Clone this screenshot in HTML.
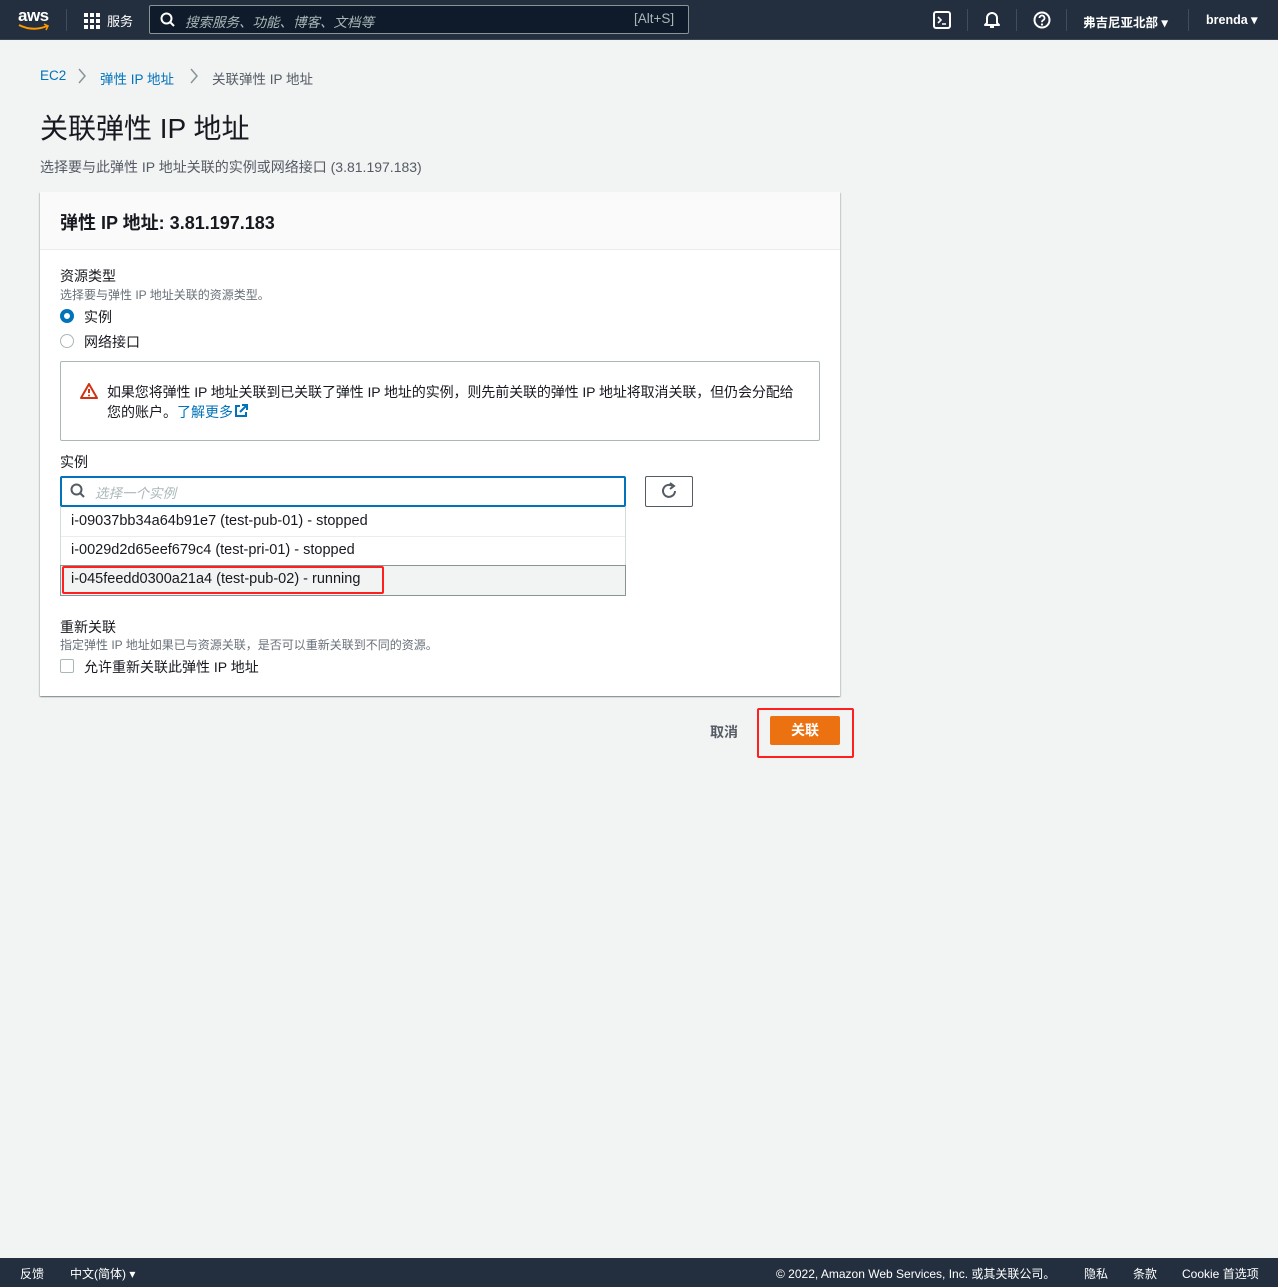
<!DOCTYPE html>
<html><head><meta charset="utf-8"><style>
*{box-sizing:border-box;margin:0;padding:0}
body{width:1278px;height:1287px;background:#f2f3f3;font-family:"Liberation Sans","Noto Sans CJK SC",sans-serif;color:#16191f;position:relative;overflow:hidden;font-size:14px}
.a{position:absolute;white-space:nowrap}
.hdr{position:absolute;left:0;top:0;width:1278px;height:40px;background:#232f3e;border-bottom:1px solid #3a4553}
.ftr{position:absolute;left:0;top:1258px;width:1278px;height:29px;background:#232f3e;color:#fff;font-size:12px}
.w{color:#fff}
.sep{position:absolute;top:9px;width:1px;height:22px;background:#414d5c}
</style></head><body>
<div class="hdr">
  <div class="a w" style="left:18px;top:6px;font-size:17px;font-weight:bold;letter-spacing:-0.5px">aws</div>
  <svg class="a" style="left:17px;top:23px" width="34" height="8"><path d="M2 2 Q16 9 30 3" stroke="#ff9900" stroke-width="2" fill="none"/><path d="M27 1 L31 3 L29 7" stroke="#ff9900" stroke-width="1.5" fill="none"/></svg>
  <div class="sep" style="left:66px"></div>
  <svg class="a" style="left:84px;top:13px" width="16" height="16"><g fill="#fff"><rect x="0" y="0" width="4" height="4"/><rect x="6" y="0" width="4" height="4"/><rect x="12" y="0" width="4" height="4"/><rect x="0" y="6" width="4" height="4"/><rect x="6" y="6" width="4" height="4"/><rect x="12" y="6" width="4" height="4"/><rect x="0" y="12" width="4" height="4"/><rect x="6" y="12" width="4" height="4"/><rect x="12" y="12" width="4" height="4"/></g></svg>
  <div class="a w" style="left:107px;top:11px;font-size:13px">服务</div>
  <div class="a" style="left:149px;top:5px;width:540px;height:29px;background:#0f1b2a;border:1px solid #879596;border-radius:2px"></div>
  <svg class="a" style="left:160px;top:12px" width="16" height="16"><circle cx="6.5" cy="6.5" r="5" stroke="#fff" stroke-width="2" fill="none"/><path d="M10 10 L14 14" stroke="#fff" stroke-width="2"/></svg>
  <div class="a" style="left:185px;top:11px;font-size:13.5px;color:#aab7b8;font-style:italic">搜索服务、功能、博客、文档等</div>
  <div class="a" style="left:634px;top:11px;font-size:13.5px;color:#aab7b8">[Alt+S]</div>
  <svg class="a" style="left:933px;top:11px" width="18" height="18"><rect x="1" y="1" width="16" height="16" rx="2" stroke="#fff" stroke-width="2" fill="none"/><path d="M5 6 L8 9 L5 12 M9 13 H13" stroke="#fff" stroke-width="1.6" fill="none"/></svg>
  <div class="sep" style="left:967px"></div>
  <svg class="a" style="left:983px;top:10px" width="18" height="20"><path d="M4 13 V8 a5 5 0 0 1 10 0 V13 L16 15 H2 Z" stroke="#fff" stroke-width="2" fill="none" stroke-linejoin="round"/><path d="M7 17 h4" stroke="#fff" stroke-width="2"/></svg>
  <div class="sep" style="left:1016px"></div>
  <svg class="a" style="left:1033px;top:11px" width="18" height="18"><circle cx="9" cy="9" r="7.5" stroke="#fff" stroke-width="2" fill="none"/><path d="M6.5 7 a2.5 2.5 0 1 1 3.5 2.3 c-1 .4 -1 1 -1 2" stroke="#fff" stroke-width="1.8" fill="none"/><circle cx="9" cy="13.5" r="1.1" fill="#fff"/></svg>
  <div class="sep" style="left:1066px"></div>
  <div class="a w" style="left:1083px;top:12px;font-size:12.5px;font-weight:bold">弗吉尼亚北部 ▾</div>
  <div class="sep" style="left:1188px"></div>
  <div class="a w" style="left:1206px;top:12px;font-size:12.5px;font-weight:bold">brenda ▾</div>
</div>

<div class="a" style="left:40px;top:68px;font-size:13.5px;color:#0073bb">EC2</div>
<svg class="a" style="left:77px;top:68px" width="10" height="16"><path d="M2 1 L8 8 L2 15" stroke="#879596" stroke-width="1.5" fill="none"/></svg>
<div class="a" style="left:100px;top:68px;font-size:13.5px;color:#0073bb">弹性 IP 地址</div>
<svg class="a" style="left:189px;top:68px" width="10" height="16"><path d="M2 1 L8 8 L2 15" stroke="#879596" stroke-width="1.5" fill="none"/></svg>
<div class="a" style="left:212px;top:68px;font-size:13.5px;color:#545b64">关联弹性 IP 地址</div>
<div class="a" style="left:40px;top:107px;font-size:28px">关联弹性 IP 地址</div>
<div class="a" style="left:40px;top:157px;font-size:14px;color:#545b64">选择要与此弹性 IP 地址关联的实例或网络接口 (3.81.197.183)</div>

<div class="a" style="left:40px;top:192px;width:800px;height:504px;background:#fff;box-shadow:0 1px 1px rgba(0,28,36,.3),1px 1px 1px rgba(0,28,36,.15),-1px 1px 1px rgba(0,28,36,.15)"></div>
<div class="a" style="left:40px;top:192px;width:800px;height:58px;background:#fafafa;border-bottom:1px solid #eaeded"></div>
<div class="a" style="left:60px;top:209px;font-size:18px;font-weight:bold">弹性 IP 地址: 3.81.197.183</div>

<div class="a" style="left:60px;top:266px;font-size:14px">资源类型</div>
<div class="a" style="left:60px;top:286px;font-size:12px;color:#687078">选择要与弹性 IP 地址关联的资源类型。</div>
<div class="a" style="left:60px;top:309px;width:14px;height:14px;border-radius:50%;border:4px solid #0073bb;background:#fff"></div>
<div class="a" style="left:84px;top:307px;font-size:14px">实例</div>
<div class="a" style="left:60px;top:334px;width:14px;height:14px;border-radius:50%;border:1px solid #aab7b8;background:#fff"></div>
<div class="a" style="left:84px;top:332px;font-size:14px">网络接口</div>

<div class="a" style="left:60px;top:361px;width:760px;height:80px;border:1px solid #aab7b8;border-radius:2px"></div>
<svg class="a" style="left:80px;top:383px" width="18" height="16"><path d="M9 1 L17 15 H1 Z" stroke="#d13212" stroke-width="2" fill="none" stroke-linejoin="round"/><path d="M9 6 V10" stroke="#d13212" stroke-width="2"/><circle cx="9" cy="12.5" r="1" fill="#d13212"/></svg>
<div class="a" style="left:107px;top:382px;font-size:14px;letter-spacing:-0.1px">如果您将弹性 IP 地址关联到已关联了弹性 IP 地址的实例，则先前关联的弹性 IP 地址将取消关联，但仍会分配给</div>
<div class="a" style="left:107px;top:402px;font-size:14px">您的账户。<span style="color:#0073bb">了解更多</span></div>
<svg class="a" style="left:234px;top:404px" width="14" height="14"><path d="M6 2 H2 V12 H12 V8" stroke="#0073bb" stroke-width="2" fill="none"/><path d="M8 1 H13 V6 M13 1 L6 8" stroke="#0073bb" stroke-width="2" fill="none"/></svg>

<div class="a" style="left:60px;top:452px;font-size:14px">实例</div>
<div class="a" style="left:60px;top:476px;width:566px;height:31px;border:2px solid #0073bb;border-radius:2px;background:#fff"></div>
<svg class="a" style="left:70px;top:483px" width="16" height="16"><circle cx="6.5" cy="6.5" r="5" stroke="#545b64" stroke-width="2" fill="none"/><path d="M10 10 L14 14" stroke="#545b64" stroke-width="2"/></svg>
<div class="a" style="left:95px;top:482px;font-size:13.5px;color:#aab7b8;font-style:italic">选择一个实例</div>
<div class="a" style="left:645px;top:476px;width:48px;height:31px;border:1px solid #545b64;border-radius:2px;background:#fff"></div>
<svg class="a" style="left:660px;top:482px" width="18" height="18"><path d="M15 9 A6 6 0 1 1 12.5 4" stroke="#545b64" stroke-width="2" fill="none"/><path d="M10 1 L14 4 L10 7" stroke="#545b64" stroke-width="2" fill="none"/></svg>

<div class="a" style="left:60px;top:507px;width:566px;height:89px;background:#fff;border:1px solid #d5dbdb;border-top:none"></div>
<div class="a" style="left:61px;top:536px;width:564px;height:1px;background:#eaeded"></div>
<div class="a" style="left:60px;top:565px;width:566px;height:31px;background:#f2f3f3;border:1px solid #879596"></div>
<div class="a" style="left:71px;top:513px;font-size:14.5px;color:#16191f">i-09037bb34a64b91e7 (test-pub-01) - stopped</div>
<div class="a" style="left:71px;top:542px;font-size:14.5px;color:#16191f">i-0029d2d65eef679c4 (test-pri-01) - stopped</div>
<div class="a" style="left:71px;top:571px;font-size:14.5px;color:#16191f">i-045feedd0300a21a4 (test-pub-02) - running</div>
<div class="a" style="left:62px;top:566px;width:322px;height:28px;border:2px solid #ff1f1f;border-radius:2px"></div>

<div class="a" style="left:60px;top:617px;font-size:14px">重新关联</div>
<div class="a" style="left:60px;top:636px;font-size:12px;color:#687078">指定弹性 IP 地址如果已与资源关联，是否可以重新关联到不同的资源。</div>
<div class="a" style="left:60px;top:659px;width:14px;height:14px;border:1px solid #aab7b8;border-radius:2px;background:#fff"></div>
<div class="a" style="left:84px;top:657px;font-size:14px">允许重新关联此弹性 IP 地址</div>

<div class="a" style="left:710px;top:722px;font-size:14px;font-weight:bold;color:#545b64">取消</div>
<div class="a" style="left:770px;top:716px;width:70px;height:29px;background:#ec7211;border-radius:2px;color:#fff;font-weight:bold;font-size:14px;text-align:center;line-height:29px">关联</div>
<div class="a" style="left:757px;top:708px;width:97px;height:50px;border:2px solid #ff1f1f;border-radius:2px"></div>

<div class="ftr">
  <div class="a" style="left:20px;top:7px">反馈</div>
  <div class="a" style="left:70px;top:7px">中文(简体) ▾</div>
  <div class="a" style="left:776px;top:7px">© 2022, Amazon Web Services, Inc. 或其关联公司。</div>
  <div class="a" style="left:1084px;top:7px">隐私</div>
  <div class="a" style="left:1133px;top:7px">条款</div>
  <div class="a" style="left:1182px;top:7px">Cookie 首选项</div>
</div>
</body></html>
